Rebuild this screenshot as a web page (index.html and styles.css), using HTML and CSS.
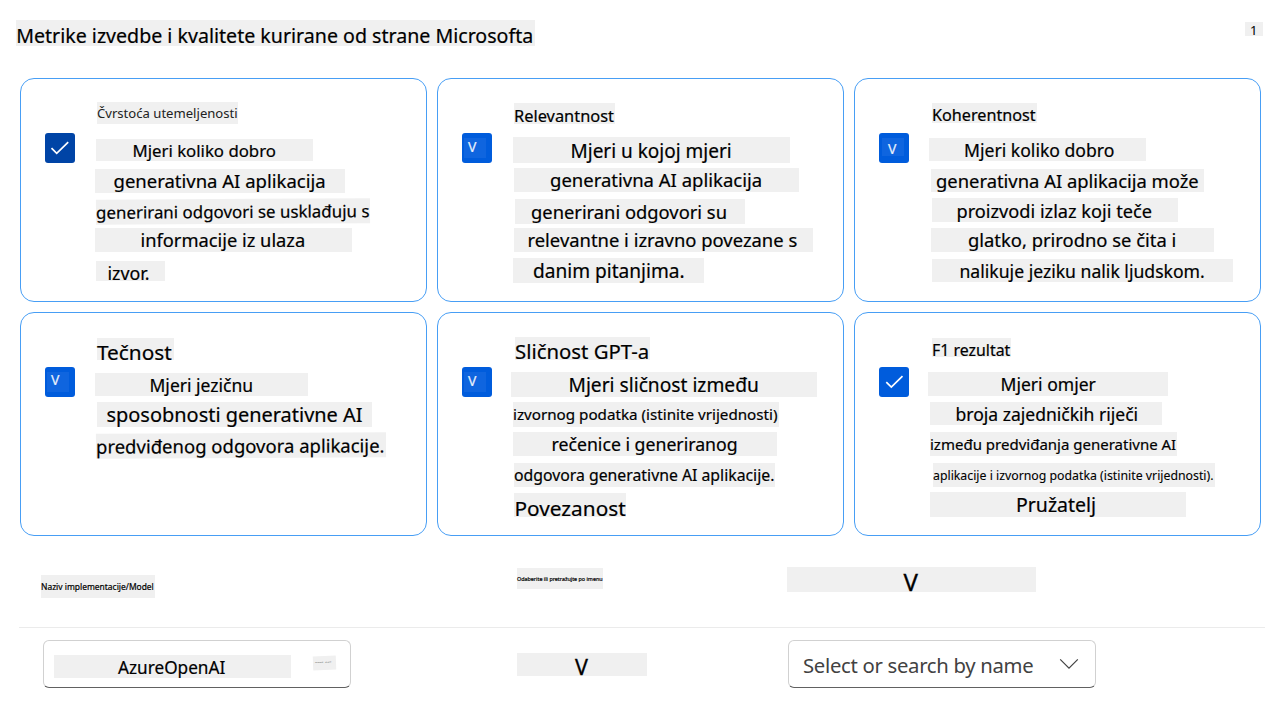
FILE: index.html
```html
<!DOCTYPE html>
<html lang="hr">
<head>
<meta charset="utf-8">
<title>Metrike izvedbe i kvalitete</title>
<link rel="stylesheet" href="styles.css">
</head>
<body>
<header class="header">
  <h1 class="line title">Metrike izvedbe i kvalitete kurirane od strane Microsofta</h1>
  <span class="line count">1</span>
</header>

<main class="cards">
  <section class="card groundedness">
    <span class="check dark"><svg class="tick" viewBox="0 0 30 30"><path d="M6.5 15.2l5.2 5.1L23.2 9.2"/></svg></span>
    <div class="body">
      <h2 class="line">Čvrstoća utemeljenosti</h2>
      <p class="line">Mjeri koliko dobro</p>
      <p class="line">generativna AI aplikacija</p>
      <p class="line">generirani odgovori se usklađuju s</p>
      <p class="line">informacije iz ulaza</p>
      <p class="line">izvor.</p>
    </div>
  </section>
  <section class="card relevance">
    <span class="check"><span class="mark">V</span></span>
    <div class="body">
      <h2 class="line">Relevantnost</h2>
      <p class="line">Mjeri u kojoj mjeri</p>
      <p class="line">generativna AI aplikacija</p>
      <p class="line">generirani odgovori su</p>
      <p class="line">relevantne i izravno povezane s</p>
      <p class="line">danim pitanjima.</p>
    </div>
  </section>
  <section class="card coherence">
    <span class="check"><span class="mark">V</span></span>
    <div class="body">
      <h2 class="line">Koherentnost</h2>
      <p class="line">Mjeri koliko dobro</p>
      <p class="line">generativna AI aplikacija može</p>
      <p class="line">proizvodi izlaz koji teče</p>
      <p class="line">glatko, prirodno se čita i</p>
      <p class="line">nalikuje jeziku nalik ljudskom.</p>
    </div>
  </section>
  <section class="card fluency">
    <span class="check"><span class="mark">V</span></span>
    <div class="body">
      <h2 class="line">Tečnost</h2>
      <p class="line">Mjeri jezičnu</p>
      <p class="line">sposobnosti generativne AI</p>
      <p class="line">predviđenog odgovora aplikacije.</p>
    </div>
  </section>
  <section class="card similarity">
    <span class="check"><span class="mark">V</span></span>
    <div class="body">
      <h2 class="line">Sličnost GPT-a</h2>
      <p class="line">Mjeri sličnost između</p>
      <p class="line">izvornog podatka (istinite vrijednosti)</p>
      <p class="line">rečenice i generiranog</p>
      <p class="line">odgovora generativne AI aplikacije.</p>
      <p class="line">Povezanost</p>
    </div>
  </section>
  <section class="card f1">
    <span class="check"><svg class="tick" viewBox="0 0 30 30"><path d="M7.3 15.2l5 4.9L23.5 9.2"/></svg></span>
    <div class="body">
      <h2 class="line">F1 rezultat</h2>
      <p class="line">Mjeri omjer</p>
      <p class="line">broja zajedničkih riječi</p>
      <p class="line">između predviđanja generativne AI</p>
      <p class="line">aplikacije i izvornog podatka (istinite vrijednosti).</p>
      <p class="line">Pružatelj</p>
    </div>
  </section>
</main>

<section class="labels">
  <div class="line model">Naziv implementacije/Model</div>
  <div class="line hint">Odaberite ili pretražujte po imenu</div>
  <div class="line arrow">V</div>
</section>

<section class="fields">
  <div class="select provider">
    <span class="line value">AzureOpenAI</span>
    <span class="line tiny">---- ---</span>
  </div>
  <div class="line arrow">V</div>
  <div class="select search">
    <span class="placeholder">Select or search by name</span>
    <svg class="chevron" viewBox="0 0 20 12"><path d="M1.2 1.4L10 10.2l8.800-8.800"/></svg>
  </div>
</section>
</body>
</html>
```
FILE: styles.css
```css
* { box-sizing: border-box; }
body {
  margin: 0;
  width: 1288px;
  height: 709px;
  overflow: hidden;
  background: #fff;
  color: #000;
  font-family: "Noto Sans", sans-serif;
}

/* Highlighted text line.
   --x: indent, --g: gap above, --w/--h: size, --p: text inset,
   --b: baseline inside the line, --s: font size */
.line {
  flex: none;
  display: block;
  width: calc(var(--w) * 1px);
  height: calc(var(--h) * 1px);
  margin: calc(var(--g, 0) * 1px) 0 0 calc(var(--x, 0) * 1px);
  padding-left: calc(var(--p, 0) * 1px);
  font-size: calc(var(--s) * 1px);
  line-height: calc((var(--b) + .4 - .388 * var(--s)) * 2px);
  font-weight: 400;
  -webkit-text-stroke: .2px currentColor;
  white-space: nowrap;
  background: #f0f0f0;
}

.header { display: flex; justify-content: space-between; height: 78px; padding: 20px 25px 0 16px; }
.title { --w: 519; --h: 26; --p: 0; --b: 23.5; --s: 19.6; text-indent: .2px; }
.count { --g: 2; --w: 18; --h: 14; --p: 5; --b: 13.2; --s: 13; -webkit-text-stroke: 0; }

.cards {
  display: grid;
  grid-template-columns: repeat(3, 407px);
  grid-auto-rows: 224px;
  gap: 10px;
  padding-left: 20px;
}
.card { display: flex; border: 1px solid #479ef5; border-radius: 14px; }
.check {
  flex: none;
  display: flex;
  width: 30px;
  height: 30px;
  margin: 54px 19px 0 24px;
  border-radius: 3px;
  background: #005cdc;
}
.check.dark { background: #0044a6; }
.tick { width: 30px; height: 30px; fill: none; stroke: #fff; stroke-width: 1.7; }
.mark {
  width: 22px;
  height: 20px;
  margin: 5px 0 0 2px;
  padding-left: 4px;
  background: #0f65df;
  color: #e8f0fc;
  font-size: 14px;
  line-height: 17px;
  -webkit-text-stroke: .2px currentColor;
}
.coherence .mark { margin-left: 3px; padding-left: 6px; height: 18px; line-height: 21px; }
.fluency .mark { line-height: 16px; }
.body { flex: 1; min-width: 0; }

.groundedness .line:nth-child(1) { --x: 3; --g: 23; --w: 141; --h: 22; --p: 0; --b: 16.5; --s: 13.1; -webkit-text-stroke: 0; color: #222; }
.groundedness .line:nth-child(2) { --x: 2; --g: 15; --w: 217; --h: 22; --p: 36.5; --b: 18; --s: 16.8; }
.groundedness .line:nth-child(3) { --x: 1; --g: 8; --w: 250; --h: 24; --p: 18.5; --b: 19; --s: 18.5; }
.groundedness .line:nth-child(4) { --x: 2; --g: 6; --w: 274; --h: 25; --p: 0; --b: 19; --s: 16.9; transform: rotate(-.35deg); }
.groundedness .line:nth-child(5) { --x: 1; --g: 4; --w: 257; --h: 24; --p: 45.5; --b: 19; --s: 18.3; }
.groundedness .line:nth-child(6) { --x: 2; --g: 9; --w: 69; --h: 20; --p: 11.5; --b: 19; --s: 17.8; }

.relevance .line:nth-child(1) { --x: 3; --g: 24; --w: 101; --h: 21; --p: 0; --b: 18.5; --s: 16.4; }
.relevance .line:nth-child(2) { --x: 2; --g: 13; --w: 277; --h: 26; --p: 57.5; --b: 21; --s: 19; }
.relevance .line:nth-child(3) { --x: 3; --g: 5; --w: 285; --h: 24; --p: 36; --b: 19; --s: 18.5; }
.relevance .line:nth-child(4) { --x: 4; --g: 7; --w: 230; --h: 25; --p: 16; --b: 19.5; --s: 18.35; }
.relevance .line:nth-child(5) { --x: 3; --g: 4; --w: 299; --h: 24; --p: 13.5; --b: 19; --s: 18.42; }
.relevance .line:nth-child(6) { --x: 2; --g: 6; --w: 191; --h: 25; --p: 20; --b: 20.800; --s: 19.1; }

.coherence .line:nth-child(1) { --x: 4; --g: 24; --w: 105; --h: 20; --p: 0; --b: 18.8; --s: 16.2; }
.coherence .line:nth-child(2) { --x: 1; --g: 15; --w: 217; --h: 23; --p: 35; --b: 18.8; --s: 17.6; }
.coherence .line:nth-child(3) { --x: 3; --g: 8; --w: 273; --h: 23; --p: 5; --b: 18.5; --s: 18.4; }
.coherence .line:nth-child(4) { --x: 4; --g: 6; --w: 246; --h: 24; --p: 24.5; --b: 19.8; --s: 18.2; }
.coherence .line:nth-child(5) { --x: 3; --g: 6; --w: 283; --h: 24; --p: 37; --b: 19; --s: 18.4; }
.coherence .line:nth-child(6) { --x: 4; --g: 7; --w: 301; --h: 23; --p: 27.5; --b: 18.8; --s: 17.6; }

.fluency .line:nth-child(1) { --x: 3; --g: 25; --w: 77; --h: 22; --p: 0; --b: 21.8; --s: 20.8; }
.fluency .line:nth-child(2) { --x: 1; --g: 13; --w: 213; --h: 23; --p: 54.5; --b: 18.5; --s: 17.5; }
.fluency .line:nth-child(3) { --x: 3; --g: 6; --w: 275; --h: 25; --p: 9.5; --b: 20.8; --s: 19.95; }
.fluency .line:nth-child(4) { --x: 2; --g: 6; --w: 290; --h: 25; --p: 0; --b: 19.3; --s: 18.5; transform: rotate(-.25deg); }

.similarity .line:nth-child(1) { --x: 4; --g: 24; --w: 135; --h: 23; --p: 0; --b: 21.5; --s: 20.35; }
.similarity .line:nth-child(2) { --x: 0; --g: 12; --w: 306; --h: 25; --p: 57.5; --b: 20; --s: 19.2; }
.similarity .line:nth-child(3) { --x: 2; --g: 5; --w: 266; --h: 25; --p: 0; --b: 18; --s: 15.2; }
.similarity .line:nth-child(4) { --x: 2; --g: 5; --w: 264; --h: 24; --p: 38.5; --b: 19; --s: 17.7; }
.similarity .line:nth-child(5) { --x: 3; --g: 7; --w: 261; --h: 24; --p: 0; --b: 18.7; --s: 15.8; }
.similarity .line:nth-child(6) { --x: 3; --g: 6; --w: 112; --h: 24; --p: .5; --b: 22.8; --s: 20.8; }

.f1 .line:nth-child(1) { --x: 4; --g: 25; --w: 79; --h: 19; --p: 0; --b: 17.8; --s: 15.9; }
.f1 .line:nth-child(2) { --x: 0; --g: 15; --w: 240; --h: 24; --p: 72.5; --b: 19; --s: 17.55; }
.f1 .line:nth-child(3) { --x: 2; --g: 6; --w: 232; --h: 23; --p: 25.5; --b: 18.8; --s: 17.55; }
.f1 .line:nth-child(4) { --x: 2; --g: 7; --w: 247; --h: 24; --p: 0; --b: 17.6; --s: 15; }
.f1 .line:nth-child(5) { --x: 5; --g: 7; --w: 282; --h: 24; --p: 0; --b: 17.5; --s: 12.3; -webkit-text-stroke: .1px; }
.f1 .line:nth-child(6) { --x: 2; --g: 5; --w: 256; --h: 25; --p: 86; --b: 20; --s: 19.5; }

.labels {
  display: flex;
  height: 92px;
  margin: 0 23px 0 19px;
  border-bottom: 1px solid #ebebeb;
}
.model { --x: 22; --g: 39; --w: 114; --h: 23; --b: 14.5; --s: 8.45; }
.hint { --x: 362; --g: 32; --w: 86; --h: 21; --b: 12.8; --s: 5.38; }
.labels .arrow { --x: 184; --g: 31; --w: 249; --h: 25; --p: 116.5; --b: 24.2; --s: 24; -webkit-text-stroke: .3px; }

.fields { display: flex; padding: 12px 0 0 43px; }
.select {
  display: flex;
  width: 308px;
  height: 48px;
  border: 1px solid #d1d1d1;
  border-bottom-color: #616161;
  border-radius: 6px;
}
.value { --x: 10; --g: 14; --w: 237; --h: 23; --p: 64; --b: 18.8; --s: 17.2; }
.tiny { --x: 22; --g: 15; --w: 23; --h: 14; --p: 2; --b: 8.5; --s: 6.5; color: #888; transform: rotate(-2deg); }
.fields .arrow { --x: 166; --g: 13; --w: 130; --h: 23; --p: 58; --b: 22.2; --s: 21.5; -webkit-text-stroke: .3px; }
.search { align-items: center; justify-content: space-between; margin-left: 141px; padding: 0 16px 0 14px; }
.placeholder { color: #424242; font-size: 20.3px; line-height: 44px; letter-spacing: -.3px; white-space: nowrap; padding-top: 2px; }
.chevron { width: 20px; height: 12px; fill: none; stroke: #424242; stroke-width: 1.2; }
```
